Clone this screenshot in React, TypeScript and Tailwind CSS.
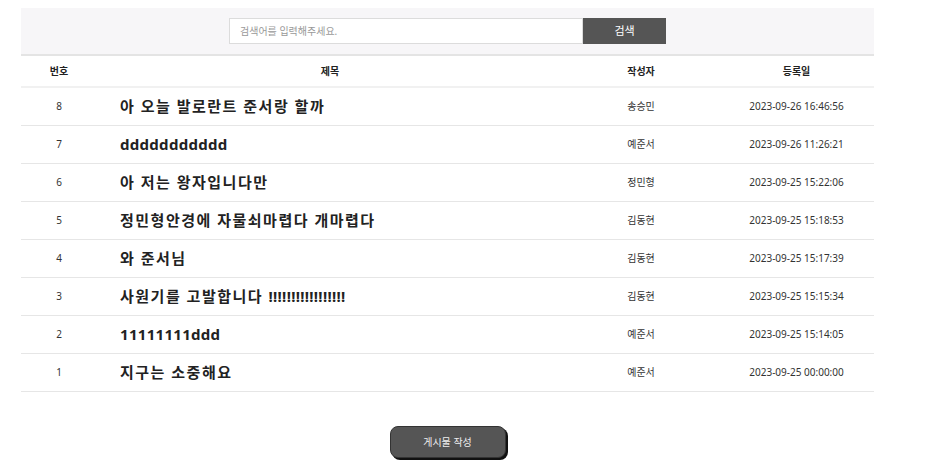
const posts = [
  { no: 8, title: "아 오늘 발로란트 준서랑 할까", writer: "송승민", date: "2023-09-26 16:46:56" },
  { no: 7, title: "ddddddddddd", writer: "예준서", date: "2023-09-26 11:26:21" },
  { no: 6, title: "아 저는 왕자입니다만", writer: "정민형", date: "2023-09-25 15:22:06" },
  { no: 5, title: "정민형안경에 자물쇠마렵다 개마렵다", writer: "김동현", date: "2023-09-25 15:18:53" },
  { no: 4, title: "와 준서님", writer: "김동현", date: "2023-09-25 15:17:39" },
  { no: 3, title: "사원기를 고발합니다 !!!!!!!!!!!!!!!!!", writer: "김동현", date: "2023-09-25 15:15:34" },
  { no: 2, title: "11111111ddd", writer: "예준서", date: "2023-09-25 15:14:05" },
  { no: 1, title: "지구는 소중해요", writer: "예준서", date: "2023-09-25 00:00:00" },
];

// hangul runs are set a little wider than latin, like the original font
function Title({ text }: { text: string }) {
  const parts = text.split(/([\uAC00-\uD7A3][\uAC00-\uD7A3 ]*)/).filter((s) => s !== "");
  return (
    <>
      {parts.map((s, i) =>
        /[\uAC00-\uD7A3]/.test(s) ? (
          <span key={i} className="tracking-[1.5px]">{s}</span>
        ) : (
          <span key={i} className="tracking-[0.3px]">{s}</span>
        )
      )}
    </>
  );
}

export default function App() {
  const rows = posts.map((p) => (
    <div key={p.no} className="grid grid-cols-[76px_466px_156px_155px] h-[38px] items-center border-b border-[#e6e6e6] text-[#333]">
      <div className="text-center text-[10px]">{p.no}</div>
      <div className="pl-[23px] text-[15px] font-bold text-[#222]">
        <Title text={p.title} />
      </div>
      <div className="text-center text-[10px]">{p.writer}</div>
      <div className="text-center text-[10px]">{p.date}</div>
    </div>
  ));

  return (
    <div className="w-[944px] h-[462px] bg-white pt-[8px] font-['Noto_Sans','Noto_Sans_CJK_KR',sans-serif]">
      <div className="ml-[21px] w-[853px]">
        <div className="h-[48px] bg-[#f7f6f8] border-b-2 border-[#e4e4e4] flex justify-center items-start pt-[10px]">
          <div className="flex">
            <input
              className="w-[354px] h-[26px] border border-[#dcdcdc] bg-white px-[10px] text-[10px] text-[#555] placeholder:text-[#999] outline-none"
              placeholder="검색어를 입력해주세요."
            />
            <button className="w-[83px] h-[26px] bg-[#555] text-white text-[11px]">검색</button>
          </div>
        </div>
        <div className="grid grid-cols-[76px_466px_156px_155px] h-[32px] items-center border-b-2 border-[#f1f1f1] text-[10px] font-bold text-[#222]">
          <div className="text-center">번호</div>
          <div className="text-center">제목</div>
          <div className="text-center">작성자</div>
          <div className="text-center">등록일</div>
        </div>
        {rows}
        <div className="flex justify-center pt-[34px]">
          <button className="w-[116px] h-[32px] rounded-[8px] bg-[#555] text-[#eee] text-[10px] shadow-[2px_2px_0_#111] border border-[#333]">
            게시물 작성
          </button>
        </div>
      </div>
    </div>
  );
}
